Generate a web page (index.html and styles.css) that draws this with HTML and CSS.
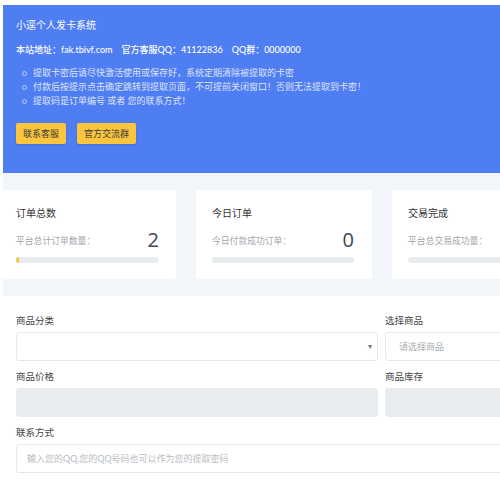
FILE: index.html
```html
<!DOCTYPE html>
<html lang="zh-CN">
<head>
<meta charset="utf-8">
<title>小逕个人发卡系统</title>
<link rel="stylesheet" href="styles.css">
</head>
<body>
<div class="page">
  <section class="hero">
    <div class="hero-title">小逕个人发卡系统</div>
    <div class="hero-info">本站地址：fak.tbivf.com<span class="sp"></span>官方客服QQ：41122836<span class="sp"></span>QQ群：0000000</div>
    <ul class="notice">
      <li>提取卡密后请尽快激活使用或保存好，系统定期清除被提取的卡密</li>
      <li>付款后按提示点击确定跳转到提取页面，不可提前关闭窗口！否则无法提取到卡密！</li>
      <li>提取码是订单编号 或者 您的联系方式！</li>
    </ul>
    <div class="hero-btns">
      <a class="btn">联系客服</a>
      <a class="btn">官方交流群</a>
    </div>
  </section>

  <section class="stats">
    <div class="card card-first">
      <div class="card-title">订单总数</div>
      <div class="card-row"><span class="card-sub">平台总计订单数量：</span><span class="card-num">2</span></div>
      <div class="bar"><div class="bar-fill" style="width:2%"></div></div>
    </div>
    <div class="card">
      <div class="card-title">今日订单</div>
      <div class="card-row"><span class="card-sub">今日付款成功订单：</span><span class="card-num">0</span></div>
      <div class="bar"><div class="bar-fill" style="width:0%"></div></div>
    </div>
    <div class="card">
      <div class="card-title">交易完成</div>
      <div class="card-row"><span class="card-sub">平台总交易成功量：</span></div>
      <div class="bar"><div class="bar-fill" style="width:0%"></div></div>
    </div>
  </section>

  <section class="form">
    <div class="field">
      <div class="label">商品分类</div>
      <div class="box select"><span class="arrow">▾</span></div>
    </div>
    <div class="field">
      <div class="label">选择商品</div>
      <div class="box"><span class="ph ph-goods">请选择商品</span></div>
    </div>
    <div class="field">
      <div class="label">商品价格</div>
      <div class="box disabled"></div>
    </div>
    <div class="field">
      <div class="label">商品库存</div>
      <div class="box disabled"></div>
    </div>
    <div class="field wide">
      <div class="label">联系方式</div>
      <div class="box"><span class="ph ph-contact">输入您的QQ,您的QQ号码也可以作为您的提取密码</span></div>
    </div>
  </section>
</div>
</body>
</html>
```

FILE: styles.css
```css
html, body {
  margin: 0;
  padding: 0;
  background: #ffffff;
  overflow: hidden;
}
body {
  width: 500px;
  height: 483px;
  font-family: Lato, "Noto Sans CJK SC", sans-serif;
  color: #333;
}
.page {
  width: 760px;
  padding: 5px 0 0 3px;
}
.hero {
  background: #4f7ef2;
  color: #fff;
  height: 168px;
  box-sizing: border-box;
  padding: 13px 13px 0;
}
.hero-title {
  font-size: 10px;
  line-height: 14px;
}
.hero-info {
  margin-top: 11px;
  font-size: 9px;
  line-height: 14px;
  font-weight: 500;
}
.sp {
  display: inline-block;
  width: 9px;
}
.notice {
  list-style: none;
  margin: 9px 0 0;
  padding: 0 0 0 17px;
  font-size: 9px;
  line-height: 14px;
  color: rgba(255, 255, 255, 0.82);
}
.notice li {
  position: relative;
}
.notice li::before {
  content: "";
  position: absolute;
  left: -11px;
  top: 5px;
  width: 3px;
  height: 3px;
  border: 1px solid rgba(255, 255, 255, 0.6);
  border-radius: 50%;
}
.hero-btns {
  margin-top: 15px;
  display: flex;
  gap: 11px;
}
.btn {
  display: inline-block;
  background: #fbc63d;
  color: #3a3a3a;
  font-size: 9px;
  line-height: 21px;
  height: 21px;
  padding: 0 7px;
  border-radius: 2px;
  box-shadow: 0 1px 2px rgba(0, 0, 0, 0.15);
}
.stats {
  background: #f2f5fa;
  padding: 17px 0 17px;
  display: flex;
  gap: 20px;
}
.card {
  background: #fff;
  width: 176px;
  flex: none;
  box-sizing: border-box;
  padding: 16px 18px 16px 16px;
  border-radius: 2px;
}
.card-first {
  width: 173px;
  padding-left: 13px;
  padding-right: 17px;
}
.card-title {
  font-size: 10px;
  line-height: 14px;
  color: #333;
}
.card-row {
  margin-top: 8px;
  display: flex;
  justify-content: space-between;
  align-items: center;
  height: 24px;
}
.card-sub {
  font-size: 8.8px;
  color: #a3a7ae;
}
.card-num {
  font-size: 20px;
  line-height: 24px;
  color: #3e4453;
  font-family: "Open Sans", "Noto Sans", sans-serif;
}
.bar {
  margin-top: 5px;
  height: 6px;
  background: #e9ecef;
  border-radius: 3px;
  overflow: hidden;
}
.bar-fill {
  height: 100%;
  background: #f8c63e;
}
.form {
  padding: 18px 0 0 13px;
  display: grid;
  grid-template-columns: 362px 362px;
  column-gap: 7px;
  row-gap: 9px;
}
.wide {
  grid-column: 1 / 3;
}
.label {
  font-size: 9.5px;
  line-height: 14px;
  color: #444;
  margin-bottom: 4px;
}
.box {
  height: 29px;
  box-sizing: border-box;
  border: 1px solid #e5e8ec;
  border-radius: 3px;
  background: #fff;
  display: flex;
  align-items: center;
  position: relative;
}
.disabled {
  background: #e9ecef;
  border-color: #e9ecef;
}
.arrow {
  position: absolute;
  right: 5px;
  top: 8px;
  font-size: 8px;
  color: #777;
}
.ph {
  font-size: 9px;
  color: #a8acb2;
}
.ph-goods {
  padding-left: 13px;
}
.ph-contact {
  padding-left: 10px;
  color: #b8bcc2;
}
```
